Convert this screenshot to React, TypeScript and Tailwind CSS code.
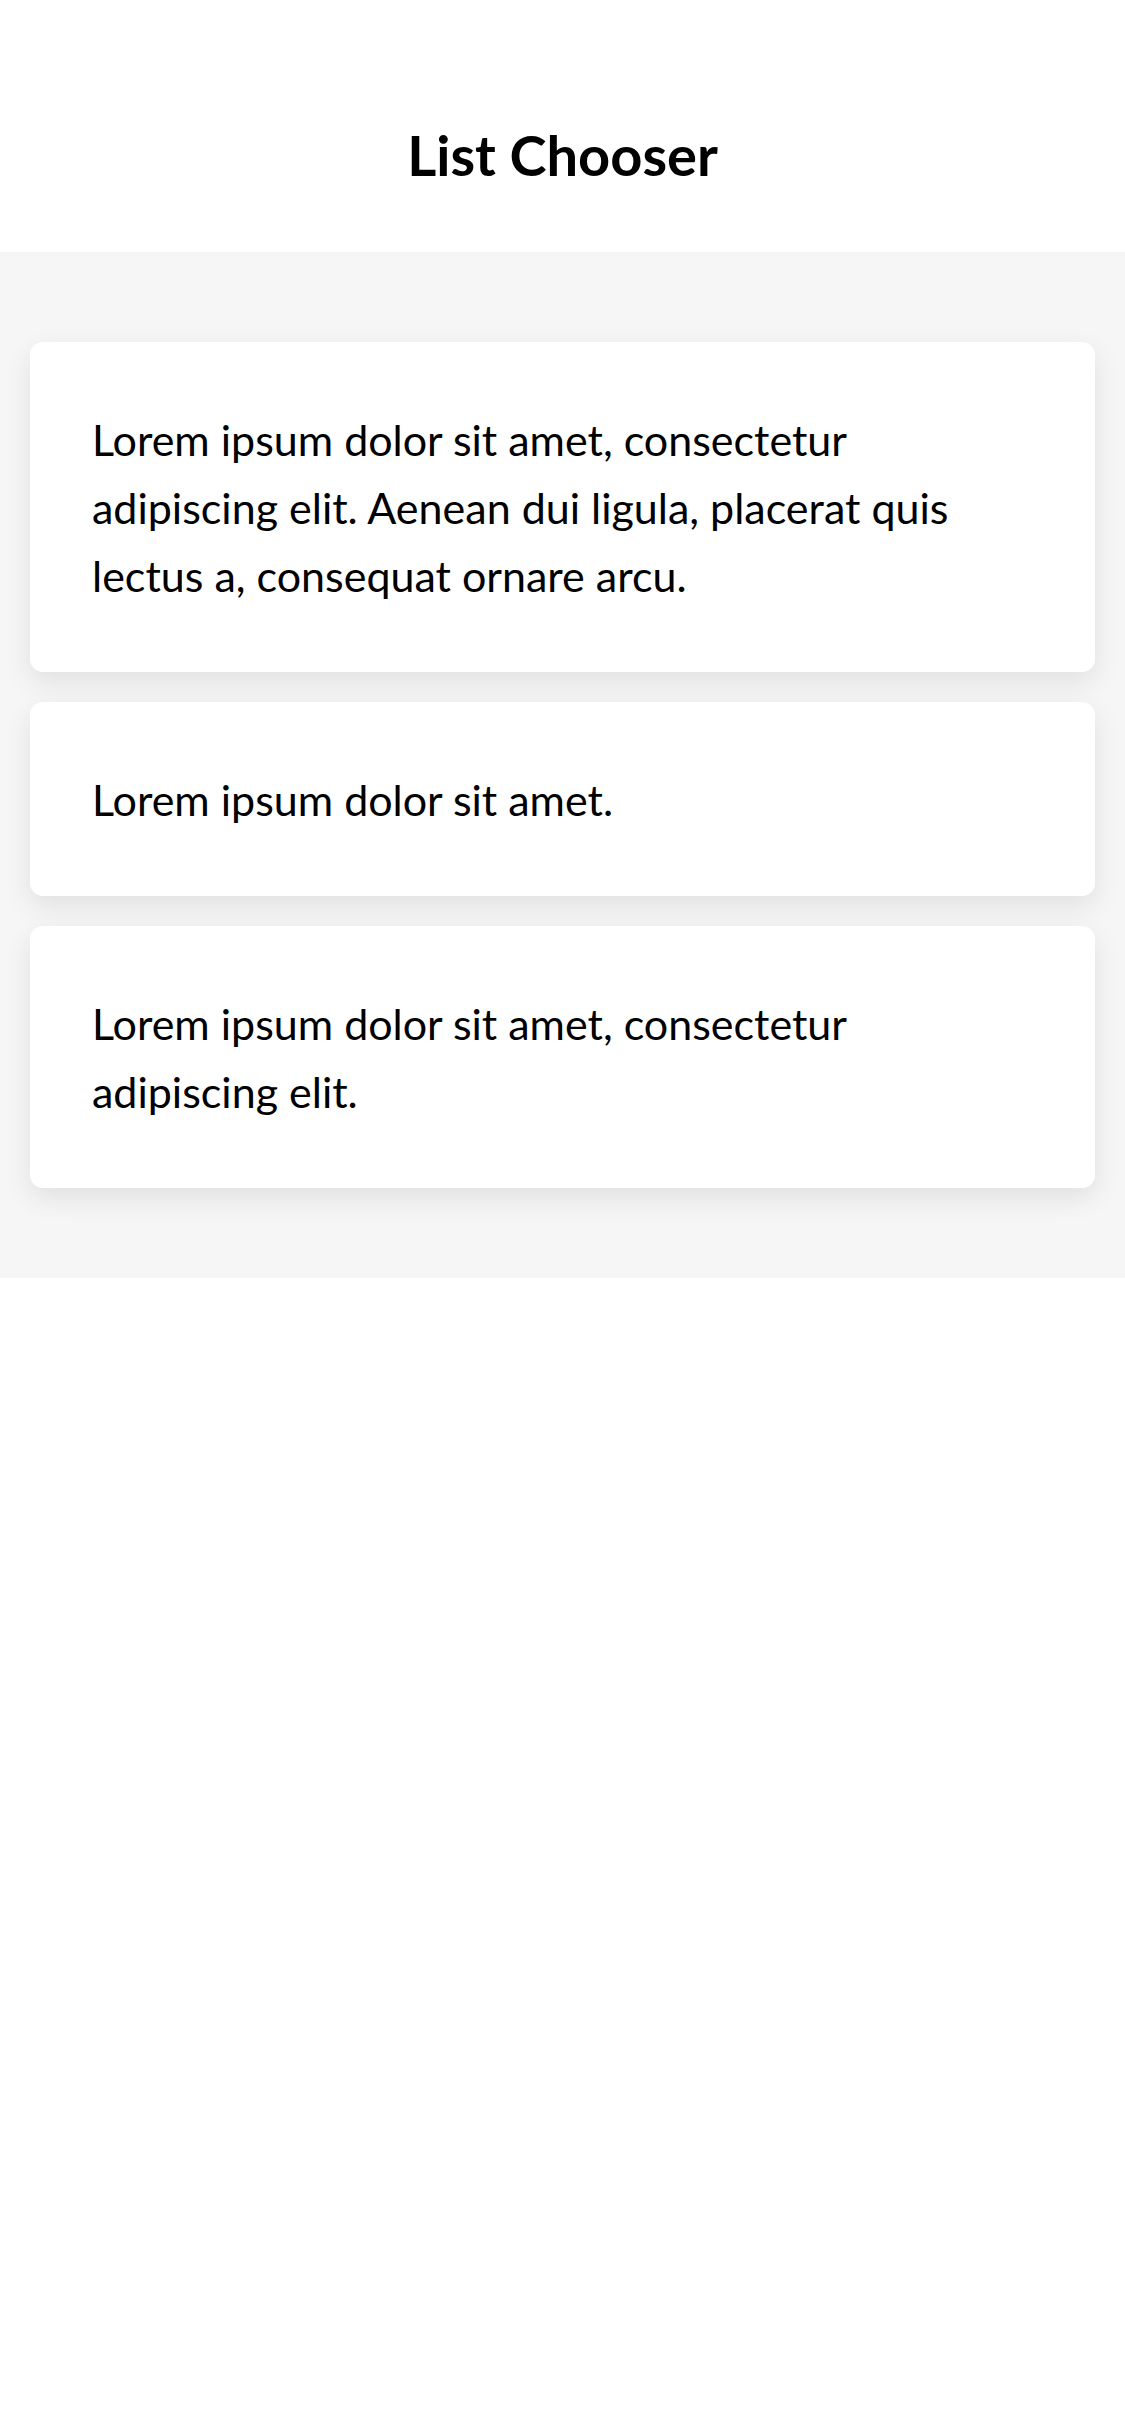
const items = [
  'Lorem ipsum dolor sit amet, consectetur adipiscing elit. Aenean dui ligula, placerat quis lectus a, consequat ornare arcu.',
  'Lorem ipsum dolor sit amet.',
  'Lorem ipsum dolor sit amet, consectetur adipiscing elit.',
]

function ListCard({ text }: { text: string }) {
  return (
    <div className="rounded-[13px] bg-white pt-[64px] pb-[62px] pl-[62px] pr-[60px] shadow-[0_10px_28px_rgba(0,0,0,0.09)]">
      <p className="text-[43px] leading-[68px] text-black">{text}</p>
    </div>
  )
}

export default function App() {
  return (
    <div className="min-h-screen bg-white font-['Lato','Noto_Sans',sans-serif] text-black">
      <header className="flex h-[252px] justify-center pt-[127px]">
        <h1 className="text-[56px] font-bold leading-none">List Chooser</h1>
      </header>
      <main className="flex flex-col gap-[30px] bg-[#f6f6f6] px-[30px] py-[90px]">
        {items.map((text, i) => (
          <ListCard key={i} text={text} />
        ))}
      </main>
    </div>
  )
}
